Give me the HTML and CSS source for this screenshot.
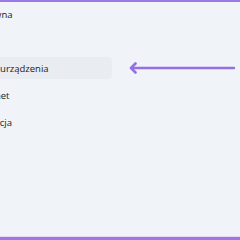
FILE: index.html
```html
<!DOCTYPE html>
<html lang="pl">
<head>
<meta charset="utf-8">
<link rel="stylesheet" href="styles.css">
</head>
<body>
<div class="frame">
  <div class="topbar"></div>
  <div class="content">
    <nav class="sidebar">
      <div class="item"><span class="label">Strona główna</span></div>
      <div class="item"><span class="label">System</span></div>
      <div class="item active"><span class="label">Bluetooth i urządzenia</span></div>
      <div class="item"><span class="label">Sieć i Internet</span></div>
      <div class="item"><span class="label">Personalizacja</span></div>
      <div class="item"><span class="label">Aplikacje</span></div>
      <div class="item"><span class="label">Konta</span></div>
    </nav>
    <div class="pointer">
      <svg class="arrow" width="108" height="12" viewBox="0 0 108 12">
        <path d="M106 6 H4" stroke="#9470e4" stroke-width="2.4" stroke-linecap="round" fill="none"/>
        <path d="M7.5 1.5 L3 6 L7.5 10.5" stroke="#9470e4" stroke-width="2.6" stroke-linecap="round" stroke-linejoin="round" fill="none"/>
      </svg>
    </div>
  </div>
  <div class="bottombar"></div>
</div>
</body>
</html>
```
FILE: styles.css
```css
html, body {
  margin: 0;
  padding: 0;
}
body {
  width: 240px;
  height: 240px;
  overflow: hidden;
  background: #f0f3f8;
  font-family: "Open Sans", "Noto Sans", sans-serif;
}
.frame {
  width: 240px;
  height: 240px;
  display: flex;
  flex-direction: column;
}
.topbar {
  height: 2px;
  background: #9a78e6;
  flex: none;
}
.content {
  flex: 1;
  display: flex;
  align-items: flex-start;
  overflow: hidden;
  padding-top: 1px;
}
.sidebar {
  flex: none;
  width: 212px;
  margin-left: -100px;
  display: flex;
  flex-direction: column;
  gap: 5px;
}
.item {
  height: 22px;
  display: flex;
  align-items: center;
  padding-left: 49px;
  border-radius: 4px;
  font-size: 9.5px;
  color: #1b1b1b;
  white-space: nowrap;
}
.item.active {
  background: #e9ecf1;
}
.pointer {
  margin-left: 16px;
  margin-top: 59px;
}
.arrow {
  display: block;
}
.bottombar {
  height: 3px;
  background: #9a78e6;
  box-shadow: 0 -1px 0 #ead8f5;
  flex: none;
}
```
